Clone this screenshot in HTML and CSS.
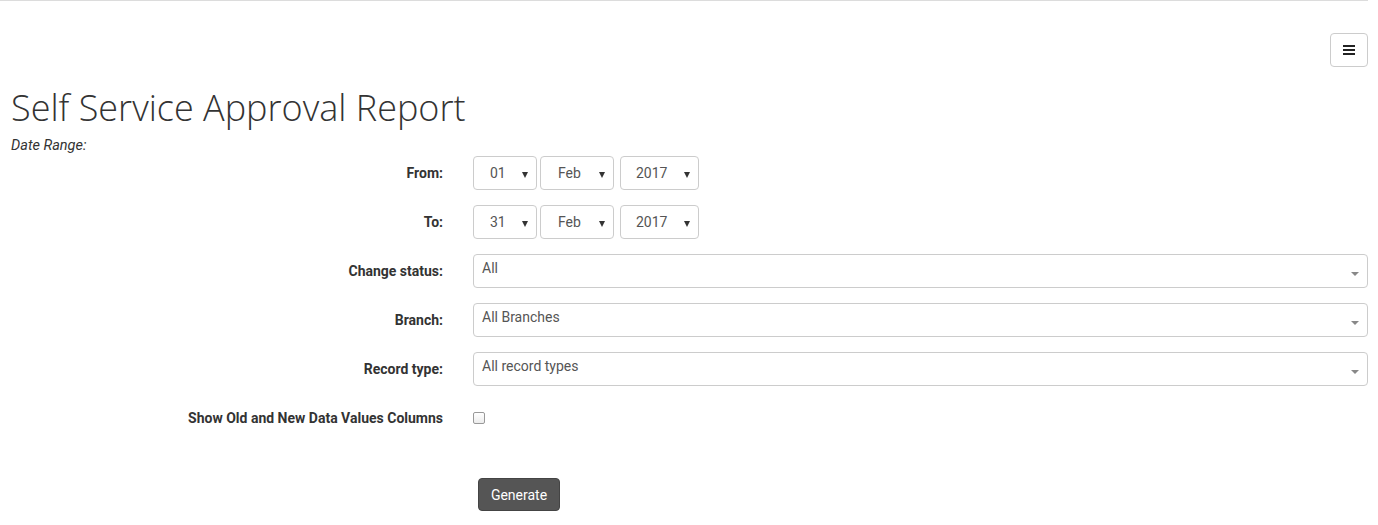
FILE: index.html
```html
<!DOCTYPE html>
<html>
<head>
<meta charset="utf-8">
<link rel="stylesheet" href="styles.css">
</head>
<body>
<div class="page">
  <div class="toolbar">
    <button class="menu-btn" aria-label="menu"><span class="bars"><i></i><i></i><i></i></span></button>
  </div>
  <h1 class="title">Self Service Approval Report</h1>
  <div class="subtitle">Date Range:</div>
  <form class="form">
    <label class="lbl">From:</label>
    <div class="ctrl dates">
      <div class="sel sel-day"><span>01</span><i class="caret"></i></div>
      <div class="sel sel-mon"><span>Feb</span><i class="caret"></i></div>
      <div class="sel sel-year"><span>2017</span><i class="caret"></i></div>
    </div>
    <label class="lbl">To:</label>
    <div class="ctrl dates">
      <div class="sel sel-day"><span>31</span><i class="caret"></i></div>
      <div class="sel sel-mon"><span>Feb</span><i class="caret"></i></div>
      <div class="sel sel-year"><span>2017</span><i class="caret"></i></div>
    </div>
    <label class="lbl">Change status:</label>
    <div class="ctrl"><div class="wide">All<i class="caret gray"></i></div></div>
    <label class="lbl">Branch:</label>
    <div class="ctrl"><div class="wide">All Branches<i class="caret gray"></i></div></div>
    <label class="lbl">Record type:</label>
    <div class="ctrl"><div class="wide">All record types<i class="caret gray"></i></div></div>
    <label class="lbl">Show Old and New Data Values Columns</label>
    <div class="ctrl"><span class="check"></span></div>
    <div class="spacer"></div>
    <div class="actions"><button type="button" class="btn">Generate</button></div>
  </form>
</div>
</body>
</html>
```

FILE: styles.css
```css
html, body {
  margin: 0;
  padding: 0;
  background: #fff;
}
body {
  font-family: Roboto, "Liberation Sans", sans-serif;
  font-size: 14px;
  color: #333;
}
.page {
  width: 1368px;
  border-top: 1px solid #dcdcdc;
}
.toolbar {
  display: flex;
  justify-content: flex-end;
  padding-top: 32px;
}
.menu-btn {
  width: 38px;
  height: 34px;
  margin: 0;
  padding: 0;
  border: 1px solid #ccc;
  border-radius: 4px;
  background: #fff;
  display: flex;
  align-items: center;
  justify-content: center;
}
.bars {
  display: flex;
  flex-direction: column;
  gap: 2px;
  width: 12px;
}
.bars i {
  display: block;
  height: 2px;
  background: #222;
}
.title {
  margin: 21px 0 0 11px;
  font-family: "Open Sans", sans-serif;
  font-weight: 300;
  font-size: 36px;
  line-height: 40px;
  color: #333;
}
.subtitle {
  margin: 9px 0 0 11px;
  font-style: italic;
  font-size: 14.5px;
  line-height: 18px;
  color: #333;
}
.form {
  display: grid;
  grid-template-columns: 443px 1fr;
  column-gap: 30px;
  row-gap: 15px;
  margin-top: 1px;
}
.lbl {
  display: flex;
  align-items: center;
  justify-content: flex-end;
  font-weight: bold;
  color: #333;
  min-height: 34px;
}
.ctrl {
  display: flex;
  align-items: center;
  min-height: 34px;
}
.dates {
  gap: 3px;
}
.sel {
  box-sizing: border-box;
  height: 34px;
  border: 1px solid #ccc;
  border-radius: 4px;
  display: flex;
  align-items: center;
  position: relative;
  color: #555;
  padding-left: 16px;
}
.sel-day { width: 64px; }
.sel-mon { width: 74px; padding-left: 17px; }
.sel-year { width: 79px; margin-left: 3px; padding-left: 15px; }
.sel .caret {
  position: absolute;
  right: 8px;
  top: 15px;
}
.caret {
  width: 0;
  height: 0;
  border-left: 3px solid transparent;
  border-right: 3px solid transparent;
  border-top: 6px solid #333;
}
.wide {
  box-sizing: border-box;
  width: 100%;
  height: 34px;
  border: 1px solid #ccc;
  border-radius: 4px;
  padding: 3px 8px;
  color: #555;
  line-height: 20px;
  position: relative;
}
.wide .caret {
  position: absolute;
  right: 8px;
  top: 17px;
  border-left-width: 4px;
  border-right-width: 4px;
  border-top: 4px solid #888;
}
.check {
  box-sizing: border-box;
  width: 12px;
  height: 12px;
  border: 1px solid #999;
  border-radius: 2px;
  background: linear-gradient(#fff, #ececec);
}
.actions {
  padding-top: 28px;
  padding-left: 5px;
  padding-bottom: 14px;
}
.btn {
  display: block;
  width: 82px;
  height: 33px;
  border: 1px solid #444;
  border-radius: 4px;
  background: #555;
  color: #fff;
  font-family: Roboto, "Liberation Sans", sans-serif;
  font-size: 14px;
  padding: 0;
}
```
